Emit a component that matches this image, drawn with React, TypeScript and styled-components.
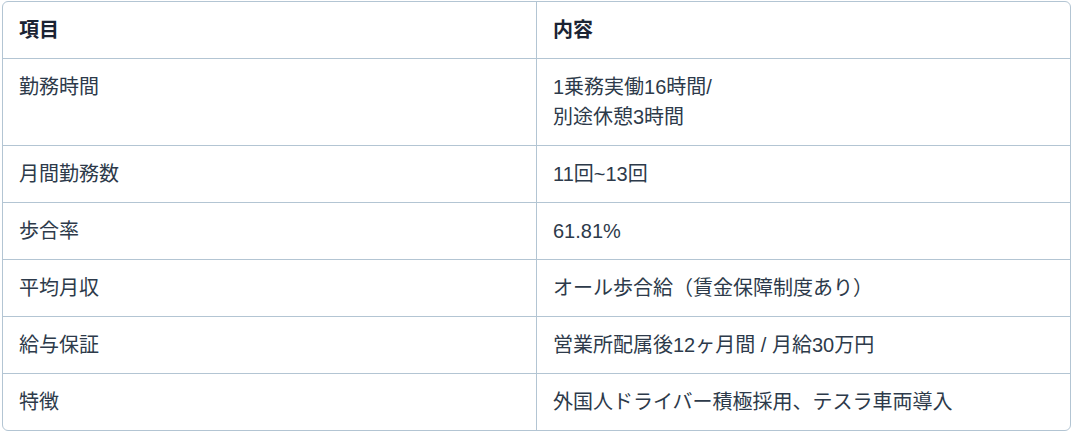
import React from 'react';
import styled, { createGlobalStyle } from 'styled-components';

const GlobalStyle = createGlobalStyle`
    body {
        margin: 0;
        background: #fff;
        font-family: "Liberation Sans", "Noto Sans CJK JP", sans-serif;
    }
`;

const Page = styled.div`
    padding: 1px 4px 0 2px;
`;

const Frame = styled.div`
    border: 1px solid #b3c5d3;
    border-radius: 6px;
    overflow: hidden;
`;

const Table = styled.table`
    width: 100%;
    border-collapse: collapse;
    table-layout: fixed;
    color: #2d3a4a;
    font-size: 20px;
    line-height: 30px;

    tbody tr:last-child > * {
        border-bottom: none;
    }
`;

const Cell = styled.td<{ $head?: boolean }>`
    padding: 13px 16px;
    text-align: left;
    vertical-align: top;
    border-bottom: 1px solid #b3c5d3;
    font-weight: ${p => (p.$head ? 700 : 400)};
    color: ${p => (p.$head ? '#1a2333' : '#2d3a4a')};

    & + & {
        border-left: 1px solid #b3c5d3;
    }
`;

const ROWS: [string, React.ReactNode][] = [
    ['勤務時間', <>1乗務実働16時間/<br />別途休憩3時間</>],
    ['月間勤務数', '11回~13回'],
    ['歩合率', '61.81%'],
    ['平均月収', 'オール歩合給（賃金保障制度あり）'],
    ['給与保証', '営業所配属後12ヶ月間 / 月給30万円'],
    ['特徴', '外国人ドライバー積極採用、テスラ車両導入'],
];

function App() {
    return (
        <Page>
            <GlobalStyle />
            <Frame>
                <Table>
                    <thead>
                        <tr>
                            <Cell as='th' $head>項目</Cell>
                            <Cell as='th' $head>内容</Cell>
                        </tr>
                    </thead>
                    <tbody>
                        {ROWS.map(([label, value]) => (
                            <tr key={label}>
                                <Cell>{label}</Cell>
                                <Cell>{value}</Cell>
                            </tr>
                        ))}
                    </tbody>
                </Table>
            </Frame>
        </Page>
    );
}

export default App;
